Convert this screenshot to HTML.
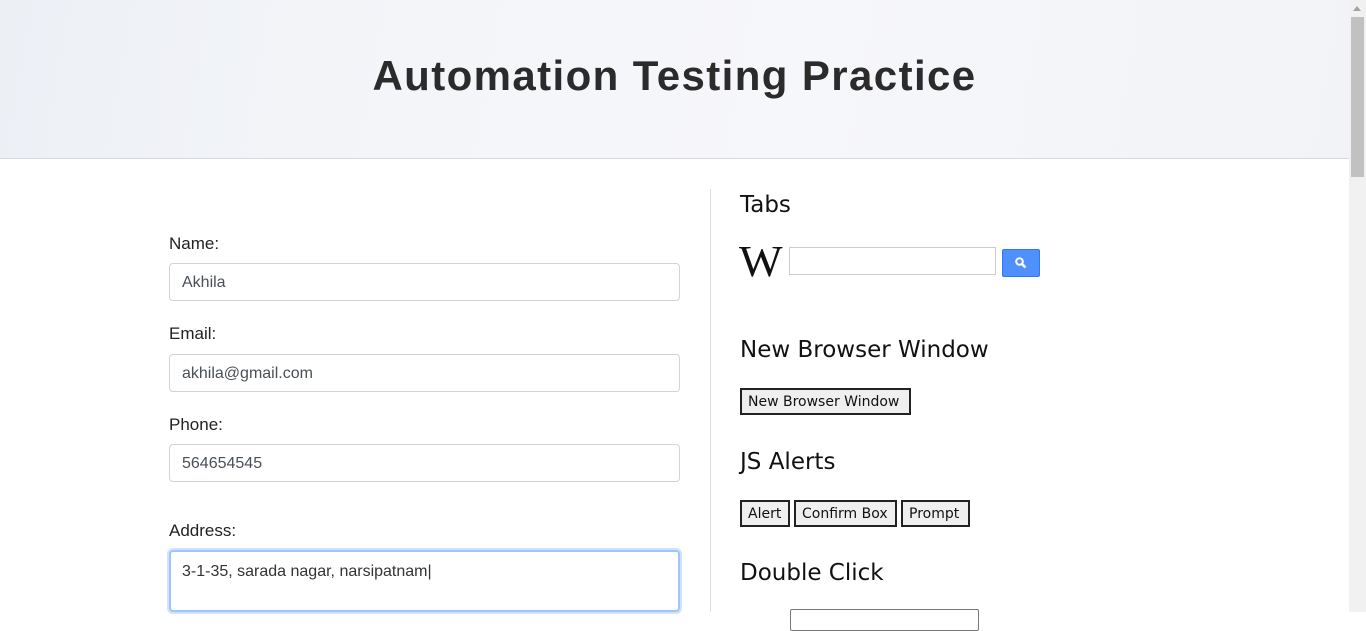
<!DOCTYPE html>
<html><head><meta charset="utf-8"><style>
body{margin:0;width:1366px;height:612px;overflow:hidden;font-family:"Liberation Sans","DejaVu Sans",sans-serif;background:#fff;position:relative}
.hdr{position:absolute;left:0;top:0;width:1349px;height:158px;background:linear-gradient(100deg,#ecf0f5 0%,#f4f5f9 30%,#f6f7fa 60%,#f1f3f7 100%);border-bottom:1px solid #d5d8dd}
.hdr h1{position:absolute;left:0;width:1349px;top:52px;margin:0;text-align:center;font-size:42px;font-weight:bold;color:#2b2b2b;letter-spacing:1.4px}
.sb{position:absolute;left:1349px;top:0;width:17px;height:612px;background:#f1f1f1}
.sb .th{position:absolute;left:2px;top:17px;width:13px;height:160px;background:#c1c1c1}
.sb .ar{position:absolute;left:4px;top:6px;border-left:4px solid transparent;border-right:4px solid transparent;border-bottom:5px solid #a3a3a3}
.lbl{position:absolute;left:169px;font-size:17px;color:#222}
.inp{position:absolute;left:169px;border:1px solid #ced4da;border-radius:4px;font-size:16px;color:#495057;line-height:38px;padding-left:12px;box-sizing:border-box;width:511px;height:38px}
.vl{position:absolute;left:710px;top:189px;width:1px;height:423px;background:#ddd}
.h{position:absolute;left:740px;font-family:"DejaVu Sans",sans-serif;font-size:23px;color:#111}
.btn{position:absolute;border:2px solid #222;background:#efefef;font-family:"DejaVu Sans",sans-serif;font-size:14px;box-sizing:border-box;padding:0 6px;color:#111}
</style></head><body>
<div class="hdr"><h1>Automation Testing Practice</h1></div>
<div class="sb"><div class="ar"></div><div class="th"></div></div>
<div class="lbl" style="top:234px">Name:</div>
<div class="inp" style="top:263px">Akhila</div>
<div class="lbl" style="top:324px">Email:</div>
<div class="inp" style="top:354px">akhila@gmail.com</div>
<div class="lbl" style="top:415px">Phone:</div>
<div class="inp" style="top:444px">564654545</div>
<div class="lbl" style="top:521px">Address:</div>
<div class="inp" style="top:550px;height:62px;border:2px solid #9ec5fe;box-shadow:0 0 0 2px #cfe2ff;line-height:40px;padding-left:11px;color:#333">3-1-35, sarada nagar, narsipatnam|</div>
<div class="vl"></div>
<div class="h" style="top:192px">Tabs</div>
<div style="position:absolute;left:739px;top:240px;font-family:'Liberation Serif',serif;font-size:44px;color:#111;line-height:44px;transform:scaleX(1.05);transform-origin:left">W</div>
<div style="position:absolute;left:789px;top:247px;width:207px;height:28px;border:1px solid #ccc;box-sizing:border-box"></div>
<div style="position:absolute;left:1002px;top:249px;width:38px;height:28px;background:#4d90fe;border:1px solid #3079ed;box-sizing:border-box;border-radius:2px">
<svg width="38" height="28" viewBox="0 0 38 28" style="position:absolute;left:-1px;top:-1px"><circle cx="17.5" cy="12.5" r="3.3" fill="none" stroke="#fff" stroke-width="2"/><line x1="20" y1="15" x2="23.5" y2="18.5" stroke="#fff" stroke-width="2.6"/></svg></div>
<div class="h" style="top:337px">New Browser Window</div>
<div class="btn" style="left:740px;top:388px;width:171px;height:27px;line-height:24px">New Browser Window</div>
<div class="h" style="top:449px">JS Alerts</div>
<div class="btn" style="left:740px;top:500px;width:50px;height:27px;line-height:24px">Alert</div>
<div class="btn" style="left:794px;top:500px;width:103px;height:27px;line-height:24px">Confirm Box</div>
<div class="btn" style="left:901px;top:500px;width:69px;height:27px;line-height:24px">Prompt</div>
<div class="h" style="top:560px">Double Click</div>
<div style="position:absolute;left:790px;top:609px;width:187px;height:20px;border:1px solid #777;border-radius:2px"></div>
</body></html>
